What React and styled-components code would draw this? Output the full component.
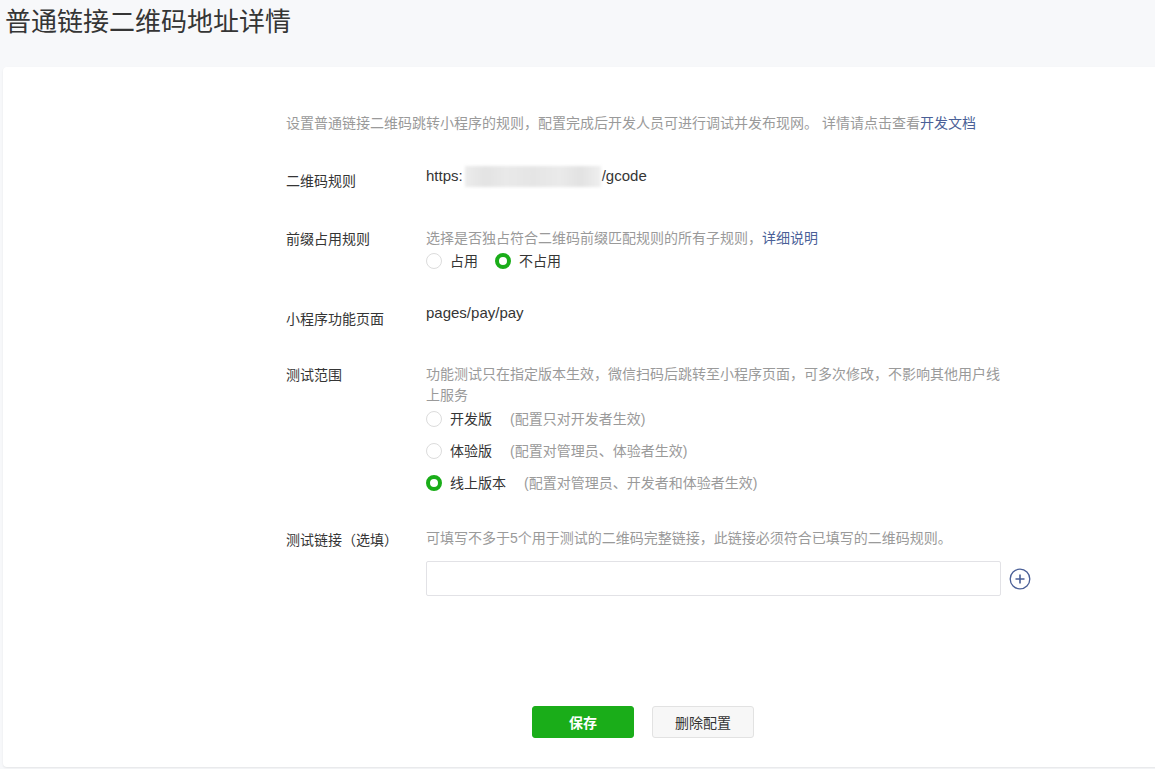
import React from "react";
import styled, { createGlobalStyle } from "styled-components";

const GlobalStyle = createGlobalStyle`
  html, body {
    margin: 0;
    padding: 0;
    background: #f7f8fa;
    overflow: hidden;
  }
  body {
    font-family: "Liberation Sans", "Noto Sans CJK SC", sans-serif;
    color: #353535;
  }
`;

const Page = styled.div`
  width: 1155px;
  height: 769px;
`;

const Title = styled.h1`
  margin: 0;
  padding: 4px 0 0 5px;
  height: 63px;
  font-size: 26px;
  line-height: 36px;
  font-weight: normal;
  color: #353535;
`;

const Card = styled.div`
  margin-left: 3px;
  width: 1162px;
  height: 700px;
  background: #fff;
  border-radius: 4px;
  box-shadow: 0 1px 2px rgba(0, 0, 0, 0.08);
  padding: 46px 0 0 283px;
  box-sizing: border-box;
`;

const Form = styled.div`
  width: 714px;
  display: flex;
  flex-direction: column;
`;

const Desc = styled.div`
  font-size: 14px;
  line-height: ${({ $lh = 20 }) => $lh}px;
  color: #9a9a9a;
`;

const Link = styled.a`
  color: #4a5f97;
  text-decoration: none;
`;

const Row = styled.div`
  display: flex;
  align-items: flex-start;
  margin-top: ${({ $top }) => $top}px;
`;

const Label = styled.div`
  width: 140px;
  flex-shrink: 0;
  font-size: 14px;
  line-height: 20px;
  padding-top: ${({ $offset = 1 }) => $offset}px;
  color: #353535;
`;

const Content = styled.div`
  width: 574px;
  display: flex;
  flex-direction: column;
`;

const Value = styled.div`
  font-size: 15px;
  line-height: 20px;
  color: #353535;
  display: flex;
  align-items: center;
  margin-top: ${({ $shift = 0 }) => $shift}px;
`;

const Masked = styled.span`
  display: inline-block;
  width: 136px;
  height: 21px;
  margin: 2px 1px 0 2px;
  background: linear-gradient(
    90deg,
    #ececec 0%,
    #e3e3e3 15%,
    #e9e9e9 30%,
    #e5e5e5 50%,
    #eaeaea 70%,
    #e2e2e2 85%,
    #efefef 100%
  );
  filter: blur(1.5px);
`;

const RadioGroup = styled.div`
  display: flex;
  flex-direction: ${({ $vertical }) => ($vertical ? "column" : "row")};
  gap: ${({ $vertical }) => ($vertical ? "12px" : "17px")};
  margin-top: 3px;
`;

const RadioItem = styled.label`
  display: flex;
  align-items: center;
  font-size: 14px;
  line-height: 20px;
  color: #353535;
`;

const Circle = styled.span`
  width: 16px;
  height: 16px;
  box-sizing: border-box;
  border-radius: 50%;
  border: ${({ $checked }) => ($checked ? "4px solid #1aad19" : "1px solid #dcdcdc")};
  background: #fff;
  margin-right: 8px;
`;

const Tip = styled.span`
  color: #9a9a9a;
  margin-left: 18px;
`;

const InputLine = styled.div`
  display: flex;
  align-items: center;
  margin-top: 13px;
`;

const Input = styled.input`
  width: 575px;
  height: 35px;
  box-sizing: border-box;
  border: 1px solid #e2e2e6;
  border-radius: 2px;
  outline: none;
  flex-shrink: 0;
`;

const AddButton = styled.span`
  margin-left: 8px;
  display: flex;
  width: 22px;
  height: 22px;
`;

const Buttons = styled.div`
  display: flex;
  justify-content: center;
  gap: 18px;
  margin-top: 110px;
`;

const Button = styled.button`
  width: 102px;
  height: 32px;
  border-radius: 3px;
  font-family: "Liberation Sans", "Noto Sans CJK SC", sans-serif;
  font-size: 14px;
  font-weight: ${({ $primary }) => ($primary ? "bold" : "normal")};
  color: ${({ $primary }) => ($primary ? "#fff" : "#353535")};
  background: ${({ $primary }) => ($primary ? "#1aad19" : "#f7f7f7")};
  border: 1px solid ${({ $primary }) => ($primary ? "#1aad19" : "#e2e2e2")};
  cursor: pointer;
`;

const Radio = ({ checked, children, tip }) => (
  <RadioItem>
    <Circle $checked={checked} />
    {children}
    {tip && <Tip>{tip}</Tip>}
  </RadioItem>
);

const PlusIcon = () => (
  <svg width="22" height="22" viewBox="0 0 22 22">
    <circle cx="11" cy="11" r="9.8" fill="none" stroke="#4a5f97" strokeWidth="1.3" />
    <path d="M11 6.5v9M6.5 11h9" stroke="#4a5f97" strokeWidth="1.6" />
  </svg>
);

export default function App() {
  return (
    <Page>
      <GlobalStyle />
      <Title>普通链接二维码地址详情</Title>
      <Card>
        <Form>
          <Desc>
            设置普通链接二维码跳转小程序的规则，配置完成后开发人员可进行调试并发布现网。 详情请点击查看
            <Link>开发文档</Link>
          </Desc>

          <Row $top={33}>
            <Label $offset={5}>二维码规则</Label>
            <Content>
              <Value $shift={-2}>
                https:
                <Masked />
                /gcode
              </Value>
            </Content>
          </Row>

          <Row $top={37}>
            <Label>前缀占用规则</Label>
            <Content>
              <Desc>
                选择是否独占符合二维码前缀匹配规则的所有子规则，<Link>详细说明</Link>
              </Desc>
              <RadioGroup>
                <Radio>占用</Radio>
                <Radio checked>不占用</Radio>
              </RadioGroup>
            </Content>
          </Row>

          <Row $top={32}>
            <Label $offset={6}>小程序功能页面</Label>
            <Content>
              <Value>pages/pay/pay</Value>
            </Content>
          </Row>

          <Row $top={35}>
            <Label>测试范围</Label>
            <Content>
              <Desc $lh={21}>
                功能测试只在指定版本生效，微信扫码后跳转至小程序页面，可多次修改，不影响其他用户线上服务
              </Desc>
              <RadioGroup $vertical>
                <Radio tip="(配置只对开发者生效)">开发版</Radio>
                <Radio tip="(配置对管理员、体验者生效)">体验版</Radio>
                <Radio checked tip="(配置对管理员、开发者和体验者生效)">
                  线上版本
                </Radio>
              </RadioGroup>
            </Content>
          </Row>

          <Row $top={35}>
            <Label $offset={2}>测试链接（选填）</Label>
            <Content>
              <Desc>可填写不多于5个用于测试的二维码完整链接，此链接必须符合已填写的二维码规则。</Desc>
              <InputLine>
                <Input />
                <AddButton>
                  <PlusIcon />
                </AddButton>
              </InputLine>
            </Content>
          </Row>

          <Buttons>
            <Button $primary>保存</Button>
            <Button>删除配置</Button>
          </Buttons>
        </Form>
      </Card>
    </Page>
  );
}
